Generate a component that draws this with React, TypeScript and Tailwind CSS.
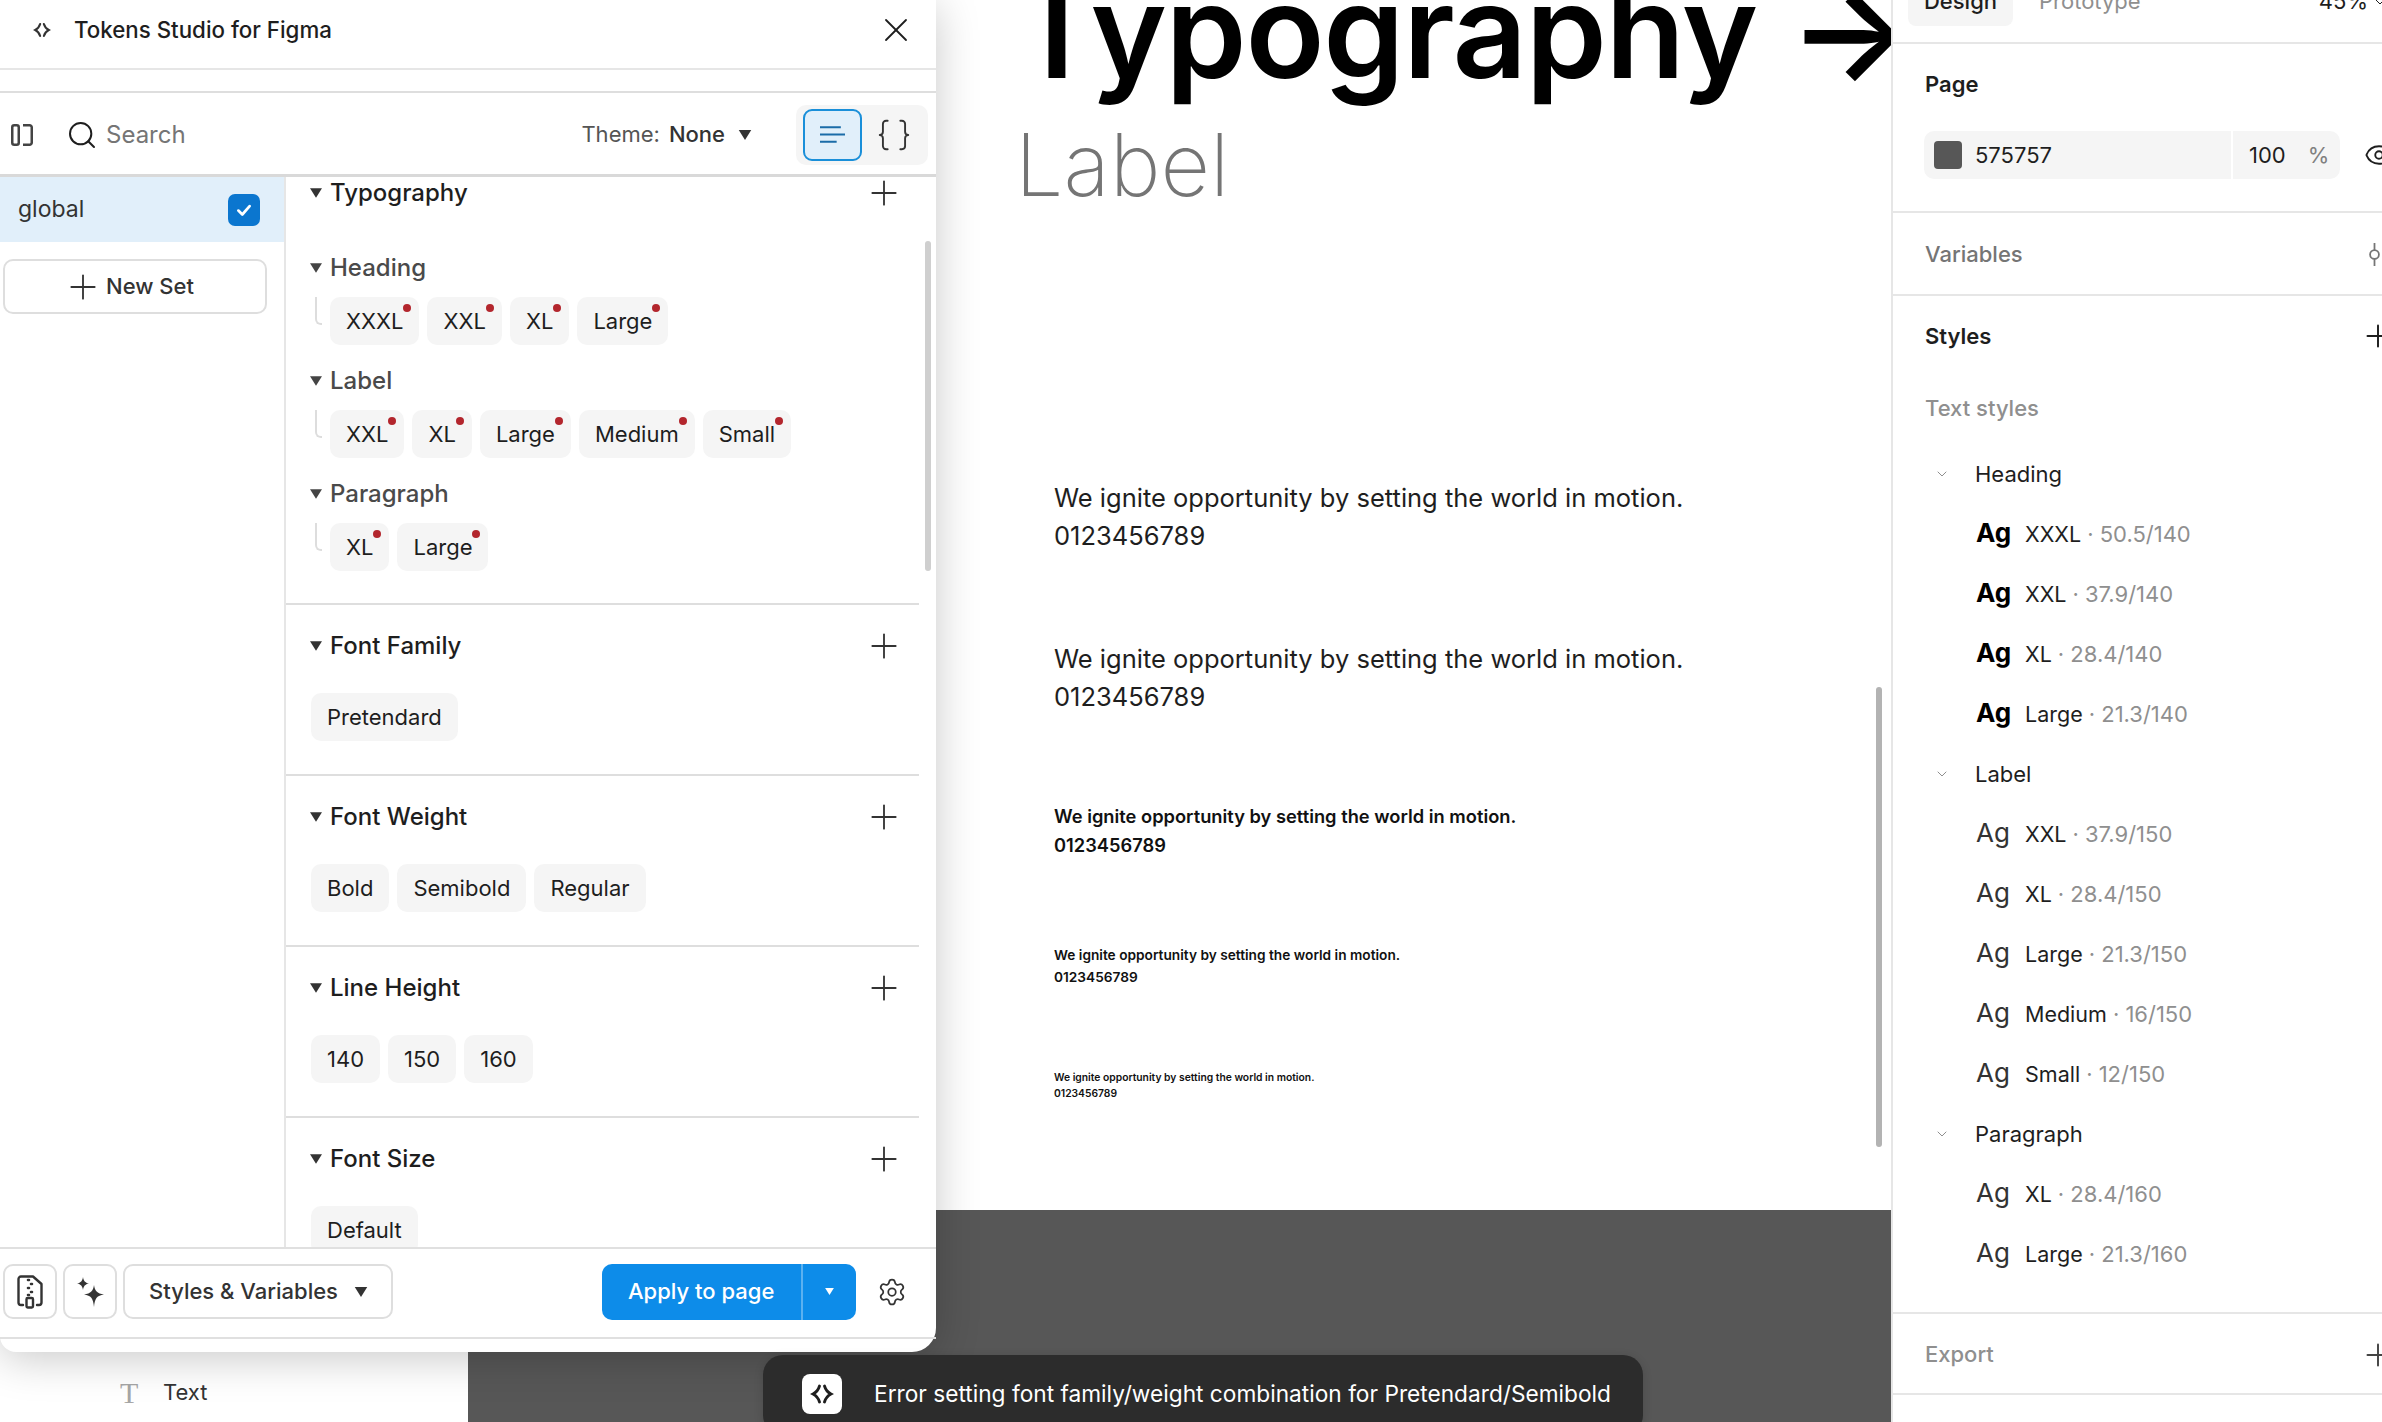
import { Braces, ChevronDown, Eye, Plus, Search, Settings, X } from 'lucide-react'

const typographyGroups = [
  { label: 'Heading', chips: ['XXXL', 'XXL', 'XL', 'Large'], pt: 'mt-[45px]' },
  { label: 'Label', chips: ['XXL', 'XL', 'Large', 'Medium', 'Small'], pt: 'mt-[22px]' },
  { label: 'Paragraph', chips: ['XL', 'Large'], pt: 'mt-[22px]' },
]

const tokenSections = [
  { label: 'Font Family', chips: ['Pretendard'] },
  { label: 'Font Weight', chips: ['Bold', 'Semibold', 'Regular'] },
  { label: 'Line Height', chips: ['140', '150', '160'] },
  { label: 'Font Size', chips: ['Default'] },
]

const textStyles = [
  {
    label: 'Heading',
    bold: true,
    items: [
      ['XXXL', '50.5/140'],
      ['XXL', '37.9/140'],
      ['XL', '28.4/140'],
      ['Large', '21.3/140'],
    ],
  },
  {
    label: 'Label',
    bold: false,
    items: [
      ['XXL', '37.9/150'],
      ['XL', '28.4/150'],
      ['Large', '21.3/150'],
      ['Medium', '16/150'],
      ['Small', '12/150'],
    ],
  },
  {
    label: 'Paragraph',
    bold: false,
    items: [
      ['XL', '28.4/160'],
      ['Large', '21.3/160'],
    ],
  },
]

function Logo({ className }: { className: string }) {
  return (
    <svg viewBox="0 0 24 24" fill="none" stroke="currentColor" strokeWidth="2.8" strokeLinecap="round" className={className}>
      <path d="M9.5 4 C8.5 7.5 6 10.5 3 12 C6 13.5 8.5 16.5 9.5 20" />
      <path d="M14.5 4 C15.5 7.5 18 10.5 21 12 C18 13.5 15.5 16.5 14.5 20" />
    </svg>
  )
}

function Caret({ className }: { className: string }) {
  return (
    <svg viewBox="0 0 10 8" fill="currentColor" className={className}>
      <path d="M0 0 H10 L5 8 Z" />
    </svg>
  )
}

function Chip({ label, dot }: { label: string; dot?: boolean }) {
  return (
    <div className="relative flex h-[48px] items-center rounded-[10px] bg-[#f5f5f5] px-[16px] text-[22px] text-[#1e1e1e]">
      {label}
      {dot && <span className="absolute right-[8px] top-[7px] h-[8px] w-[8px] rounded-full bg-[#b3262d]" />}
    </div>
  )
}

function SectionHeader({ label }: { label: string }) {
  return (
    <div className="flex h-[32px] items-center">
      <Caret className="ml-[24px] h-[10px] w-[12px] text-[#333333]" />
      <span className="ml-[8px] flex-1 text-[24px] font-medium text-[#1e1e1e]">{label}</span>
      <Plus strokeWidth={1.1} className="mr-[15px] h-[40px] w-[40px] text-[#333333]" />
    </div>
  )
}

function TokensPlugin() {
  return (
    <div className="absolute left-0 top-0 flex h-[1352px] w-[936px] flex-col rounded-bl-[16px] rounded-br-[24px] bg-white shadow-[0_6px_44px_rgba(0,0,0,0.22)]">
      <div className="flex h-[70px] shrink-0 items-center border-b-2 border-[#e6e6e6] pb-[8px] pl-[33px] pr-[20px]">
        <Logo className="h-[18px] w-[18px] text-[#333333]" />
        <span className="ml-[23px] flex-1 text-[22.3px] font-medium text-[#1e1e1e]">Tokens Studio for Figma</span>
        <X strokeWidth={1.1} className="h-[40px] w-[40px] text-[#1e1e1e]" />
      </div>
      <div className="h-[23px] shrink-0 border-b-2 border-[#dedede]" />
      <div className="flex h-[84px] shrink-0 items-center border-b-[3px] border-[#d9d9d9] pl-[11px] pr-[8px] pt-[2px]">
        <svg viewBox="0 0 22 22" fill="none" stroke="#444444" strokeWidth="2.5" className="h-[22px] w-[22px]">
          <rect x="1.25" y="1.25" width="6.5" height="19.5" rx="2" />
          <path d="M12 1.25 H18.5 A2.2 2.2 0 0 1 20.75 3.5 V18.5 A2.2 2.2 0 0 1 18.5 20.75 H12" />
        </svg>
        <Search strokeWidth={1.5} className="ml-[33px] h-[32px] w-[32px] text-[#1e1e1e]" />
        <span className="ml-[8px] text-[24px] text-[#757575]">Search</span>
        <span className="ml-auto text-[22px] text-[#555555]">Theme:</span>
        <span className="ml-[9px] text-[22px] font-medium text-[#333333]">None</span>
        <Caret className="ml-[13px] h-[10px] w-[14px] text-[#333333]" />
        <div className="ml-[44px] flex h-[60px] w-[132px] items-center rounded-[10px] bg-[#f5f5f5] pl-[7px]">
          <div className="flex h-[52px] w-[59px] items-center justify-center rounded-[9px] border-2 border-[#1a8fd9] bg-[#e1effa]">
            <svg viewBox="0 0 24 16" stroke="#1b6ca8" strokeWidth="2" className="h-[17px] w-[25px]">
              <path d="M0 1 H20 M0 8 H24 M0 15 H16" />
            </svg>
          </div>
          <Braces strokeWidth={1.2} className="ml-[13px] h-[38px] w-[38px] text-[#333333]" />
        </div>
      </div>

      <div className="relative flex min-h-0 flex-1">
        <div className="w-[286px] shrink-0 border-r-2 border-[#e6e6e6]">
          <div className="flex h-[65px] items-center justify-between bg-[#e1effa] pl-[18px] pr-[24px]">
            <span className="text-[23px] text-[#333333]">global</span>
            <div className="flex h-[32px] w-[32px] items-center justify-center rounded-[7px] bg-[#0b76cf]">
              <svg viewBox="0 0 16 16" fill="none" stroke="white" strokeWidth="2.4" strokeLinecap="round" strokeLinejoin="round" className="h-[18px] w-[18px]">
                <path d="M3 8.5 L6.5 12 L13 4.5" />
              </svg>
            </div>
          </div>
          <div className="ml-[3px] mt-[17px] flex h-[55px] w-[264px] items-center rounded-[10px] border-2 border-[#dedede] pl-[58px] text-[22px] font-medium text-[#333333]">
            <Plus strokeWidth={1.1} className="h-[40px] w-[40px]" />
            <span className="ml-[3px]">New Set</span>
          </div>
        </div>

        <div className="min-w-0 flex-1 overflow-hidden">
          <div className="w-[633px] border-b-2 border-[#dedede] pb-[32px]">
            <SectionHeader label="Typography" />
            {typographyGroups.map((group) => (
              <div key={group.label} className={group.pt}>
                <div className="flex h-[28px] items-center">
                  <Caret className="ml-[24px] h-[10px] w-[12px] text-[#444444]" />
                  <span className="ml-[8px] text-[24px] font-medium text-[#4a4a4a]">{group.label}</span>
                </div>
                <div className="mt-[15px] flex">
                  <div className="ml-[29px] h-[28px] w-[7px] rounded-bl-[6px] border-b-2 border-l-2 border-[#dddddd]" />
                  <div className="ml-[8px] flex gap-[8px]">
                    {group.chips.map((chip) => (
                      <Chip key={chip} label={chip} dot />
                    ))}
                  </div>
                </div>
              </div>
            ))}
          </div>
          {tokenSections.map((section) => (
            <div key={section.label} className="h-[171px] w-[633px] border-b-2 border-[#dedede] pt-[25px]">
              <SectionHeader label={section.label} />
              <div className="ml-[25px] mt-[31px] flex gap-[8px]">
                {section.chips.map((chip) => (
                  <Chip key={chip} label={chip} />
                ))}
              </div>
            </div>
          ))}
        </div>
        <div className="absolute right-[5px] top-[64px] h-[330px] w-[6px] rounded-full bg-[#cfcfcf]" />
      </div>

      <div className="flex h-[92px] shrink-0 items-center border-b-2 border-t-2 border-[#e0e0e0] pb-[3px] pl-[3px] pr-[29px]">
        <div className="flex h-[55px] w-[54px] items-center justify-center rounded-[10px] border-2 border-[#dedede]">
          <svg viewBox="0 0 26 34" fill="none" className="h-[34px] w-[26px]" stroke="#333333" strokeWidth="2.4" strokeLinecap="round" strokeLinejoin="round">
            <path d="M6 30 H4 A2.5 2.5 0 0 1 1.5 27.5 V4 A2.5 2.5 0 0 1 4 1.5 H16 L24.5 9 V27.5 A2.5 2.5 0 0 1 22 30 H20" />
            <path d="M11 5 H12 M14 9 H15 M11 13 H12 M14 17 H15 M11 20 H12" strokeWidth="2.6" />
            <rect x="9.5" y="23" width="6.5" height="9.5" rx="1.2" />
          </svg>
        </div>
        <div className="ml-[6px] flex h-[55px] w-[54px] items-center justify-center rounded-[10px] border-2 border-[#dedede]">
          <svg viewBox="0 0 30 32" fill="#333333" className="h-[32px] w-[30px]">
            <path d="M8 1 C8.6 5 10 6.6 14 7.5 C10 8.4 8.6 10 8 14 C7.4 10 6 8.4 2 7.5 C6 6.6 7.4 5 8 1 Z" />
            <path d="M19 9 C19.8 15 22 17.4 29 18.5 C22 19.6 19.8 22 19 31 C18.2 22 16 19.6 9 18.5 C16 17.4 18.2 15 19 9 Z" />
          </svg>
        </div>
        <div className="ml-[6px] flex h-[55px] w-[270px] items-center rounded-[10px] border-2 border-[#dedede] pl-[24px]">
          <span className="text-[22px] font-medium text-[#333333]">Styles &amp; Variables</span>
          <Caret className="ml-[16px] h-[10px] w-[14px] text-[#333333]" />
        </div>
        <div className="ml-auto flex h-[56px] w-[254px] items-center rounded-[10px] bg-[#0d8ce9] text-white">
          <span className="w-[199px] pl-[26px] text-[22px] font-medium">Apply to page</span>
          <div className="flex h-full flex-1 items-center justify-center border-l-2 border-[#5cb1f0]">
            <Caret className="h-[7px] w-[9px]" />
          </div>
        </div>
        <Settings strokeWidth={1.4} className="ml-[21px] h-[30px] w-[30px] text-[#333333]" />
      </div>
      <div className="h-[13px] shrink-0" />
    </div>
  )
}

function Canvas() {
  return (
    <div className="flex min-w-0 flex-1 flex-col">
      <div className="relative h-[1210px] shrink-0 overflow-hidden bg-white">
        <div className="-mt-[49px] ml-[546px] whitespace-nowrap text-[130px] font-semibold leading-[160px] tracking-[-0.01em] text-black">
          Typography →
        </div>
        <div className="ml-[547px] mt-[4px] text-[86px] font-extralight leading-[100px] text-[#757575]">Label</div>
        <div className="ml-[586px] mt-[264px] text-[25.5px] leading-[38px] text-[#1e1e1e]">
          We ignite opportunity by setting the world in motion.
          <br />
          0123456789
        </div>
        <div className="ml-[586px] mt-[85px] text-[25.5px] leading-[38px] text-[#1e1e1e]">
          We ignite opportunity by setting the world in motion.
          <br />
          0123456789
        </div>
        <div className="ml-[586px] mt-[86px] text-[18.3px] font-semibold leading-[29px] text-[#111111]">
          We ignite opportunity by setting the world in motion.
          <br />
          0123456789
        </div>
        <div className="ml-[586px] mt-[84px] text-[13.7px] font-semibold leading-[22px] text-[#111111]">
          We ignite opportunity by setting the world in motion.
          <br />
          0123456789
        </div>
        <div className="ml-[586px] mt-[81px] text-[10.3px] font-semibold leading-[16px] text-[#111111]">
          We ignite opportunity by setting the world in motion.
          <br />
          0123456789
        </div>
        <div className="absolute left-[1408px] top-[687px] h-[460px] w-[6px] rounded-full bg-[#b3b3b3]" />
      </div>
      <div className="flex-1 bg-[#575757]" />
    </div>
  )
}

function RightPanel() {
  return (
    <div className="w-[491px] shrink-0 overflow-hidden border-l-2 border-[#e6e6e6] bg-white text-[22px] text-[#1e1e1e]">
      <div className="flex h-[44px] border-b-2 border-[#e6e6e6] pl-[15px]">
        <div className="-mt-[23px] flex h-[49px] w-[105px] items-center justify-center rounded-[8px] bg-[#f5f5f5] font-medium">Design</div>
        <div className="-mt-[23px] ml-[26px] flex h-[49px] items-center text-[#8f8f8f]">Prototype</div>
        <div className="-mr-[6px] -mt-[23px] ml-auto flex h-[49px] items-center gap-[4px]">
          45%
          <ChevronDown strokeWidth={1.5} className="h-[16px] w-[16px]" />
        </div>
      </div>
      <div className="h-[169px] border-b-2 border-[#e6e6e6]">
        <div className="flex h-[80px] items-center pl-[32px] font-semibold">Page</div>
        <div className="ml-[31px] mt-[7px] flex w-[491px] items-center">
          <div className="flex h-[48px] w-[416px] items-center rounded-[10px] bg-[#f5f5f5] pl-[10px]">
            <div className="h-[28px] w-[28px] rounded-[4px] bg-[#575757]" />
            <span className="ml-[13px] w-[256px]">575757</span>
            <div className="h-full w-[2px] bg-white" />
            <span className="ml-[16px]">100</span>
            <span className="ml-[22px] text-[#808080]">%</span>
          </div>
          <Eye strokeWidth={1.5} className="ml-[24px] h-[30px] w-[30px] shrink-0" />
        </div>
      </div>
      <div className="flex h-[83px] items-center justify-between border-b-2 border-[#e6e6e6] pl-[32px] pt-[2px] font-medium text-[#757575]">
        <span>Variables</span>
        <svg viewBox="0 0 14 26" fill="none" stroke="#757575" strokeWidth="2" className="mr-[1px] h-[23px] w-[13px]">
          <path d="M7 0 V8 M7 18 V26" />
          <circle cx="7" cy="13" r="5" />
        </svg>
      </div>
      <div className="flex h-[82px] items-center justify-between pb-[2px] pl-[32px] font-semibold">
        <span>Styles</span>
        <div className="mr-[-14px]">
          <Plus strokeWidth={1.3} className="h-[36px] w-[36px]" />
        </div>
      </div>
      <div className="flex h-[60px] items-center pl-[32px] font-medium text-[#8f8f8f]">Text styles</div>
      <div className="mt-[6px]">
        {textStyles.map((group) => (
          <div key={group.label}>
            <div className="flex h-[60px] items-center pl-[41px]">
              <ChevronDown strokeWidth={1.5} className="h-[16px] w-[16px] text-[#8f8f8f]" />
              <span className="ml-[25px]">{group.label}</span>
            </div>
            {group.items.map(([name, spec]) => (
              <div key={name} className="flex h-[60px] items-center pl-[83px] text-[21.5px]">
                <span className={group.bold ? '-mt-[3px] w-[49px] text-[26px] font-bold text-black' : '-mt-[3px] w-[49px] text-[26px] text-[#333333]'}>Ag</span>
                <span>{name}</span>
                <span className="ml-[6px] text-[22px] text-[#8f8f8f]">· {spec}</span>
              </div>
            ))}
          </div>
        ))}
      </div>
      <div className="mt-[28px] flex h-[83px] items-center justify-between border-b-2 border-t-2 border-[#e6e6e6] pl-[32px] pt-[2px] font-medium text-[#8f8f8f]">
        <span>Export</span>
        <div className="mr-[-14px]">
          <Plus strokeWidth={1.3} className="h-[36px] w-[36px] text-[#444444]" />
        </div>
      </div>
    </div>
  )
}

export default function App() {
  return (
    <div className="relative flex h-[1422px] w-[2382px] overflow-hidden bg-white font-[Inter,sans-serif]">
      <div className="flex w-[468px] shrink-0 flex-col justify-end bg-white pb-[16px]">
        <div className="flex h-[28px] items-center pl-[120px] text-[22px] text-[#333333]">
          <span className="w-[43px] font-['Liberation_Serif',serif] text-[30px] font-normal text-[#a6a6a6]">T</span>
          Text
        </div>
      </div>
      <Canvas />
      <RightPanel />
      <TokensPlugin />
      <div className="absolute left-[763px] top-[1355px] flex h-[80px] w-[880px] items-start rounded-[20px] bg-[#2c2c2c] pl-[39px] pt-[19px] shadow-[0_2px_10px_rgba(0,0,0,0.15)]">
        <div className="flex h-[40px] w-[40px] items-center justify-center rounded-[8px] bg-white">
          <Logo className="h-[24px] w-[24px] text-[#1e1e1e]" />
        </div>
        <span className="ml-[32px] text-[22.7px] leading-[40px] text-white">Error setting font family/weight combination for Pretendard/Semibold</span>
      </div>
    </div>
  )
}
